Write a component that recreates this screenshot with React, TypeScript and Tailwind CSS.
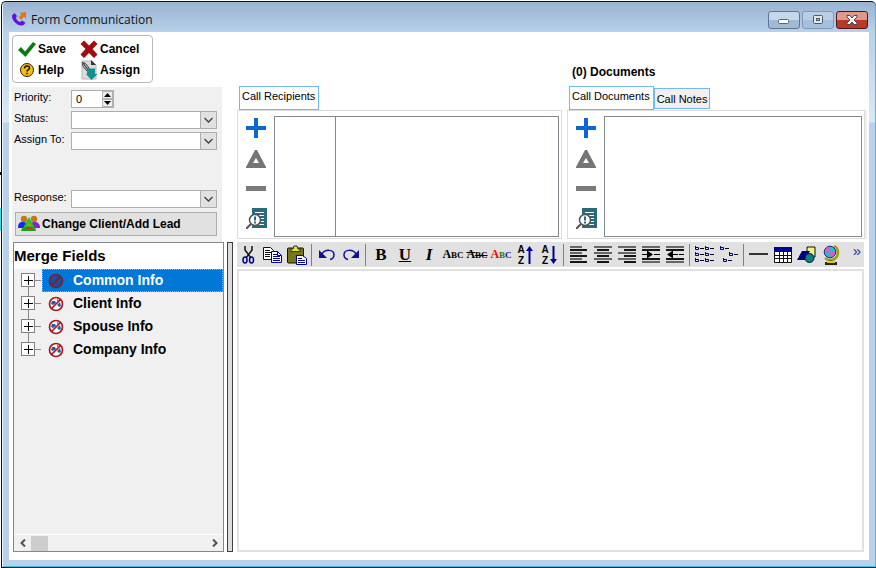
import React from "react";

type IconProps = { children: React.ReactNode; w?: number; h?: number };

function Svg({ children, w = 20, h = 20 }: IconProps) {
  return (
    <svg width={w} height={h} viewBox={`0 0 ${w} ${h}`} fill="none" aria-hidden="true" className="block shrink-0">
      {children}
    </svg>
  );
}

/* ---------- window chrome ---------- */

function TitleBar() {
  const frame = "flex h-[18px] w-8 items-center justify-center rounded-[3px] border";
  return (
    <header className="flex h-[30px] shrink-0 items-center pr-2 pl-[9px]">
      <div className="pt-1">
        <Svg w={16} h={16}>
          <path d="M1 4.500 3.500 2 6 5 4.800 6.800C5.500 9 7.200 10.500 9.300 11l1.700-1.500 3.500 2.200-2.300 2.500C7.500 16 .5 10 1 4.500Z" fill="#6410d8" />
          <path d="M8.500 2 15 1v6.500l-2.200-2L10.500 9 7.500 6.500l2.800-2.700Z" fill="#e8750a" />
        </Svg>
      </div>
      <h1 className="ml-1 flex-1 pt-[6px] font-['Open_Sans','Noto_Sans',sans-serif] text-[12px] leading-4 text-[#111]">Form Communication</h1>
      <div className="flex gap-[2px] pt-[6px]">
        <button aria-label="Minimize" className={`${frame} border-[#5f7590] bg-linear-to-b from-[#c5d7ea] from-50% to-[#a0bad5] to-50%`}>
          <Svg w={12} h={8}><rect x=".5" y="3.500" width="10" height="4" rx="1" fill="#fff" stroke="#5a6270" /></Svg>
        </button>
        <button aria-label="Maximize" className={`${frame} border-[#8199b4] bg-linear-to-b from-[#b9cfe6] from-50% to-[#a5c0dd] to-50%`}>
          <Svg w={12} h={10}>
            <rect x="1.500" y=".5" width="9" height="8" rx="1" fill="#e4e6e8" stroke="#4e5866" />
            <rect x="4.500" y="3.500" width="3" height="2" fill="#a5c0dd" stroke="#4e5866" />
          </Svg>
        </button>
        <button aria-label="Close" className={`${frame} border-[#4a1620] bg-linear-to-b from-[#e0988a] from-50% to-[#b83a22] to-50%`}>
          <Svg w={12} h={10}>
            <path d="M1 .5h3l2 2.500L8 .5h3V2L8 5l3 3v1.500H8L6 7 4 9.500H1V8l3-3-3-3Z" fill="#f4f4f4" stroke="#4a4550" />
          </Svg>
        </button>
      </div>
    </header>
  );
}

/* ---------- command box ---------- */

const SaveIcon = () => (
  <Svg><path d="M1 11 4 8l4 4.500L16 3l3 2L8.500 18Z" fill="#0b7a12" /></Svg>
);
const CancelIcon = () => (
  <Svg><path d="m1.500 5 3.500-3.500 5 5 5-5L18.500 5l-5 5 5 5.500L15 19l-5-5-5 5-3.500-3.500 5-5.500Z" fill="#a00c10" /></Svg>
);
const HelpIcon = () => (
  <Svg>
    <circle cx="10" cy="10" r="6.500" fill="#f5bd10" stroke="#2b2200" />
    <path d="M7.500 8.500c0-3.500 5-3.300 5-.5 0 1.800-2.500 1.800-2.500 3.500M10 12.800v1.500" stroke="#111" strokeWidth="1.500" />
  </Svg>
);
const AssignIcon = () => (
  <Svg>
    <path d="M3 1h10l4 4v14H3Z" fill="#dcdcdc" stroke="#b4b4b4" />
    <path d="M12 0v5h5Z" fill="#333" />
    <path d="m3 2 8 9.500M5.500 2.500C3 3 3 5 4.500 7l4 4.500c2 1.500 3.500-.5 2.500-2L7 4C5.500 2.500 4.500 4 5.500 5.500L9 10" stroke="#333" />
    <path d="M8 8.500h8V14h2.500L12.500 20 7 14h1Z" fill="#12908f" />
  </Svg>
);

function CommandBox() {
  const item = "flex h-[21px] items-center gap-px text-[12px] leading-4 font-bold";
  return (
    <div className="grid w-[141px] grid-cols-[62px_1fr] rounded-[4px] border border-[#b8b8b8] px-1 py-[2px]">
      <button className={item}><SaveIcon />Save</button>
      <button className={item}><CancelIcon />Cancel</button>
      <button className={item}><HelpIcon />Help</button>
      <button className={item}><AssignIcon />Assign</button>
    </div>
  );
}

/* ---------- call form ---------- */

function SelectRow({ id, label }: { id: string; label: string }) {
  return (
    <div className="flex h-[21px] items-center">
      <label htmlFor={id} className="w-[57px] shrink-0 pb-[3px] whitespace-nowrap">{label}</label>
      <div className="relative h-[18px] flex-1">
        <select id={id} className="block h-full w-full appearance-none border border-[#adadad] bg-white px-1 outline-none">
          <option value="" />
        </select>
        <span className="pointer-events-none absolute inset-y-0 right-0 flex w-[17px] items-center justify-center border border-[#adadad] bg-[#e1e1e1]">
          <Svg w={9} h={6}><path d="m.5 1 4 4 4-4" stroke="#404040" strokeWidth="1.300" /></Svg>
        </span>
      </div>
    </div>
  );
}

function CallForm() {
  return (
    <form className="mt-1 flex h-[155px] w-[210px] flex-col bg-[#f0f0f0] pt-px pr-[5px] pl-[2px] text-[11px] leading-[14px]">
      <div className="flex h-[21px] items-center">
        <label htmlFor="priority" className="w-[57px] pb-[3px]">Priority:</label>
        <div className="flex h-[18px] w-[43px] border border-[#adadad] bg-white">
          <input id="priority" type="text" inputMode="numeric" defaultValue="0" className="w-[30px] bg-transparent pl-1 outline-none" />
          <div className="flex w-[11px] flex-col">
            <button type="button" aria-label="Increase" className="flex h-2 items-center justify-center border border-[#b4b4b4] bg-[#eee]">
              <Svg w={7} h={4}><path d="M3.500 0 7 4H0Z" fill="#000" /></Svg>
            </button>
            <button type="button" aria-label="Decrease" className="flex h-2 items-center justify-center border border-[#b4b4b4] bg-[#eee]">
              <Svg w={7} h={4}><path d="M3.500 4 7 0H0Z" fill="#000" /></Svg>
            </button>
          </div>
        </div>
      </div>
      <SelectRow id="status" label="Status:" />
      <SelectRow id="assign" label="Assign To:" />
      <div className="mt-[37px]">
        <SelectRow id="response" label="Response:" />
      </div>
      <button type="button" className="mt-[3px] ml-px flex h-6 items-center gap-[2px] border border-[#adadad] bg-[#e1e1e1] pl-[2px] text-[12px] font-bold">
        <Svg w={22} h={18}>
          <circle cx="6" cy="4" r="3.200" fill="#c07a10" />
          <circle cx="16" cy="4" r="3.200" fill="#c07a10" />
          <path d="M0 13c0-6 3-6 5-6s5 1 5 6Z" fill="#1526f0" />
          <path d="M12 13c0-6 3-6 5-6s5 1 5 6Z" fill="#8a22c8" />
          <path d="m11 2 7 13H4Z" fill="#1fc425" />
          <path d="M3 16c1-5 4-4 8-4s6-1 7 4Z" fill="#18a51c" />
          <path d="m11 7 2.500 4h-5Z" fill="#c88a30" />
          <path d="M7 14c1-3 7-3 8 0Z" fill="#d8351c" />
        </Svg>
        Change Client/Add Lead
      </button>
    </form>
  );
}

/* ---------- recipients and documents ---------- */

const listActions = [
  { name: "Add", art: <path d="M8 0h4v8h8v4h-8v8H8v-8H0V8h8Z" fill="#0a68d0" /> },
  { name: "Edit", art: <path fillRule="evenodd" d="M9 2h2l9 17v1H0v-1ZM10 10l-3 5h6Z" fill="#757575" /> },
  { name: "Remove", art: <path d="M0 8h20v5H0Z" fill="#7a7a7a" /> },
  {
    name: "Preview",
    art: (
      <>
        <path d="M6 0h15v20H6Z" fill="#286a80" />
        <path d="M9 4.500h9M11 7.500h7M13 10.500h5M13 13.500h5M10 16.500h8" stroke="#fff" />
        <circle cx="9" cy="12" r="5.500" fill="#fff" stroke="#555" strokeWidth="1.500" />
        <path d="M5 16 0 21" stroke="#555" strokeWidth="2" />
        <path d="M9 8.500v4M9 13.500v2" stroke="#286a80" strokeWidth="2" />
      </>
    ),
  },
];

function ListPanel({ split = false }: { split?: boolean }) {
  return (
    <div className="flex h-[129px] border border-[#dcdcdc] bg-white pt-[5px] pr-[2px] pb-px">
      <div className="flex w-9 shrink-0 flex-col gap-[10px] pt-[2px] pl-2">
        {listActions.map((a) => (
          <button key={a.name} aria-label={a.name} className="h-5 w-[21px]">
            <Svg w={21} h={21}>{a.art}</Svg>
          </button>
        ))}
      </div>
      <div className="flex flex-1 border border-[#828790] bg-white">
        {split && <div className="w-[61px] border-r border-[#828790]" />}
      </div>
    </div>
  );
}

const activeTab = "h-6 border border-[#70b8f8] bg-white pr-[3px] pb-1 pl-[2px]";
const idleTab = "mb-px h-[21px] border border-[#70b8f8] bg-[#f0f0f0] px-[2px]";

function CallLists() {
  return (
    <div className="flex min-w-0 flex-1 items-end gap-[5px] pr-[2px] pb-[3px] pl-[15px] text-[11px] leading-[14px]">
      <section className="min-w-0 flex-[325]">
        <div className="flex pl-[2px]">
          <button className={activeTab}>Call Recipients</button>
        </div>
        <ListPanel split />
      </section>
      <section className="min-w-0 flex-[300]">
        <h2 className="mb-[6px] pl-[5px] text-[12px] leading-4 font-bold">(0) Documents</h2>
        <div className="flex items-end pl-[2px]">
          <button className={activeTab}>Call Documents</button>
          <button className={idleTab}>Call Notes</button>
        </div>
        <div className="border-r-2 border-[#efefef]">
          <ListPanel />
        </div>
      </section>
    </div>
  );
}

/* ---------- merge field tree ---------- */

const fields = ["Common Info", "Client Info", "Spouse Info", "Company Info"];

function FieldIcon({ selected }: { selected: boolean }) {
  return (
    <Svg w={16} h={16}>
      <circle cx="8" cy="8" r="6.500" fill={selected ? "#1f4e96" : "#fff"} />
      {!selected && <path d="M4 5h3l1 2-3 2-2-1ZM9 9l3-3 1 4-2 1ZM9 3l2 1-2 1Z" fill="#2a56b0" />}
      <circle cx="8" cy="8" r="6.500" stroke={selected ? "#7c1e34" : "#a81a20"} strokeWidth="1.700" />
      <path d="m3.500 12.500 9-9" stroke={selected ? "#7c1e34" : "#a81a20"} strokeWidth="1.700" />
    </Svg>
  );
}

function MergeTree() {
  return (
    <aside className="flex w-[211px] shrink-0 flex-col border border-[#828790] bg-[#f0f0f0]">
      <h2 className="h-[26px] bg-white text-[15px] leading-[25px] font-bold">Merge Fields</h2>
      <ul className="flex-1 text-[14px] font-bold">
        {fields.map((name, i) => (
          <li key={name} className="flex h-[23px]">
            <div className="flex w-[21px] flex-col items-end">
              <div className={i === 0 ? "mr-[6px] h-1 w-px" : "mr-[6px] h-1 w-px bg-[#888]"} />
              <button aria-label={`Expand ${name}`} className="flex size-[14px] items-center justify-center border border-[#808080] bg-white">
                <Svg w={10} h={10}><path d="M1 5.500h9M5.500 1v9" stroke="#000" /></Svg>
              </button>
              <div className={i === 3 ? "h-0" : "mr-[6px] h-[5px] w-px bg-[#888]"} />
            </div>
            <div className="mt-[11px] mr-px h-px w-[6px] bg-[#888]" />
            <div
              className={
                i === 0
                  ? "flex flex-1 items-center gap-[9px] border border-dotted border-[#ff9a30] bg-[#0078d7] pl-[5px] text-white"
                  : "flex flex-1 items-center gap-[9px] pl-[6px]"
              }
            >
              <FieldIcon selected={i === 0} />
              <span>{name}</span>
            </div>
          </li>
        ))}
      </ul>
      <div className="flex h-[17px] items-center border-t border-white">
        <button aria-label="Scroll left" className="flex w-[17px] justify-center">
          <Svg w={6} h={8}><path d="M5 .5 1.500 4 5 7.500" stroke="#505050" strokeWidth="2" /></Svg>
        </button>
        <div className="h-[15px] w-[17px] bg-[#cdcdcd]" />
        <button aria-label="Scroll right" className="ml-auto flex w-[17px] justify-center">
          <Svg w={6} h={8}><path d="M1 .5 4.500 4 1 7.500" stroke="#505050" strokeWidth="2" /></Svg>
        </button>
      </div>
    </aside>
  );
}

/* ---------- editor ---------- */

function Caps({ colors, strike = false }: { colors: string[]; strike?: boolean }) {
  return (
    <span className={strike ? "font-['Liberation_Serif',serif] text-[9px] leading-4 font-bold line-through" : "font-['Liberation_Serif',serif] text-[9px] leading-4 font-bold"}>
      <span className={`text-[12px] ${colors[0]}`}>A</span>
      <span className={colors[1]}>B</span>
      <span className={colors[2]}>C</span>
    </span>
  );
}

const serif = "font-['Liberation_Serif',serif] text-[17px] leading-5 font-bold";
const ink = ["text-black", "text-black", "text-black"];

function SortIcon({ up }: { up: boolean }) {
  return (
    <span className="flex items-center">
      <span className="flex flex-col text-[10px] leading-[11px] font-bold"><span>A</span><span>Z</span></span>
      <Svg w={8} h={20}>
        {up ? <path d="m4.500 1 3.500 5H5.500v13h-2V6H1Z" fill="#000090" /> : <path d="m4.500 19 3.500-5H5.500V1h-2v13H1Z" fill="#000090" />}
      </Svg>
    </span>
  );
}

function Lines({ rows }: { rows: [number, number][] }) {
  return (
    <Svg w={18} h={18}>
      {rows.map(([x, w], i) => (
        <rect key={i} x={x} y={i * 3} width={w} height={2} fill={i % 2 ? "#151515" : "#666"} />
      ))}
    </Svg>
  );
}

function IndentIcon({ back }: { back?: boolean }) {
  return (
    <Svg w={18} h={18}>
      <path d="M0 1h18M0 16h18" stroke="#666" strokeWidth="2" />
      <path d="M0 4h18M0 13h18" stroke="#151515" strokeWidth="2" />
      {back ? <path d="m1 8.500 6-4v8Z" fill="#000" /> : <path d="m11 8.500-6-4v8Z" fill="#000" />}
      {back ? <path d="M7 8.500h5M13 8.500h5" stroke="#000" /> : <path d="M0 8.500h6M12 8.500h6" stroke="#000" />}
    </Svg>
  );
}

function Bullet({ x, y }: { x: number; y: number }) {
  return (
    <>
      <path d={`M${x + 0.5} ${y}v3.500h3v-2h-3`} stroke="#000090" />
      <path d={`M${x + 5} ${y + 2.5}h4`} stroke="#000" />
    </>
  );
}

const groups: { name: string; art: React.ReactNode }[][] = [
  [
    {
      name: "Cut",
      art: (
        <Svg>
          <path d="M6 1v4l6 8M13 1v4l-6 8" stroke="#111" strokeWidth="1.500" />
          <ellipse cx="6" cy="15" rx="2" ry="3" stroke="#000090" strokeWidth="1.500" />
          <ellipse cx="12.500" cy="15" rx="2" ry="3" stroke="#000090" strokeWidth="1.500" />
        </Svg>
      ),
    },
    {
      name: "Copy",
      art: (
        <Svg>
          <path d="M.5 2.500h7l3 3v9H.5Z" fill="#fff" stroke="#111" />
          <path d="M2 5.500h5M2 7.500h6M2 9.500h5M2 11.500h5" stroke="#111" />
          <path d="M8.500 6.500h6l4 4v7h-10Z" fill="#fff" stroke="#000090" />
          <path d="M14.500 6.500v4h4M10 9.500h4M10 11.500h7M10 13.500h7M10 15.500h7" stroke="#000090" />
        </Svg>
      ),
    },
    {
      name: "Paste",
      art: (
        <Svg>
          <rect x=".5" y="3" width="16" height="15" rx="1" fill="#77751b" stroke="#111" />
          <path d="M4 6.500h9V4h-2l-1-3H7L6 4H4Z" fill="#e6e03b" stroke="#333" />
          <path d="M9.500 10.500h6l4 3v6h-10Z" fill="#fff" stroke="#000090" />
          <path d="M11 13.500h4M11 15.500h7M11 17.500h7" stroke="#000090" />
        </Svg>
      ),
    },
  ],
  [
    {
      name: "Undo",
      art: <Svg><path d="M5 9c3-5 12-5 12 1 0 2.500-2 4-4 4.500" stroke="#10108e" strokeWidth="1.500" /><path d="M2 5v8h8Z" fill="#10108e" /></Svg>,
    },
    {
      name: "Redo",
      art: <Svg><path d="M15 9C12 4 3 4 3 10c0 2.500 2 4 4 4.500" stroke="#10108e" strokeWidth="1.500" /><path d="M18 5v8h-8Z" fill="#10108e" /></Svg>,
    },
  ],
  [
    { name: "Bold", art: <span className={serif}>B</span> },
    { name: "Underline", art: <span className={`${serif} underline`}>U</span> },
    { name: "Italic", art: <span className={`${serif} italic`}>I</span> },
    { name: "Small caps", art: <Caps colors={ink} /> },
    { name: "Strikethrough", art: <Caps colors={ink} strike /> },
    { name: "Font colour", art: <Caps colors={["text-[#f00]", "text-[#088020]", "text-[#1010a0]"]} /> },
    { name: "Sort ascending", art: <SortIcon up /> },
    { name: "Sort descending", art: <SortIcon up={false} /> },
  ],
  [
    { name: "Align left", art: <Lines rows={[[0, 12], [0, 17], [0, 12], [0, 17], [0, 12], [0, 17]]} /> },
    { name: "Center", art: <Lines rows={[[0, 18], [3, 12], [0, 18], [3, 12], [0, 18], [3, 12]]} /> },
    { name: "Align right", art: <Lines rows={[[0, 18], [6, 12], [0, 18], [6, 12], [0, 18], [6, 12]]} /> },
    { name: "Indent", art: <IndentIcon /> },
    { name: "Outdent", art: <IndentIcon back /> },
  ],
  [
    {
      name: "Bullets",
      art: <Svg>{[1, 7, 13].map((y) => <React.Fragment key={y}><Bullet x={0} y={y} /><Bullet x={10} y={y} /></React.Fragment>)}</Svg>,
    },
    { name: "Outline", art: <Svg><Bullet x={1} y={1} /><Bullet x={10} y={7} /><Bullet x={4} y={13} /></Svg> },
  ],
  [
    { name: "Horizontal line", art: <Svg><path d="M0 9h19" stroke="#333" strokeWidth="2" /></Svg> },
    {
      name: "Insert table",
      art: (
        <Svg>
          <path d="M1.500 2.500h17v15h-17Z" fill="#fff" stroke="#111" />
          <path d="M1 2h18v5H1Z" fill="#000090" />
          <path d="M1 10.500h18M1 13.500h18M6.500 7v11M10.500 7v11M14.500 7v11" stroke="#111" />
        </Svg>
      ),
    },
    {
      name: "Insert shape",
      art: (
        <Svg>
          <path d="M10 2h8v10h-8Z" fill="#f6f08a" stroke="#111" />
          <path d="M5 6h8l-5 9H0Z" fill="#000080" />
          <circle cx="12.500" cy="13" r="4.500" fill="#0b8080" stroke="#113" />
        </Svg>
      ),
    },
    {
      name: "Insert link",
      art: (
        <Svg>
          <path d="M13 1c6 3 5 12-2 14H7l-3-2" stroke="#a89a10" strokeWidth="2.500" />
          <circle cx="9" cy="7" r="5.800" fill="#28b8d0" stroke="#1c2a90" />
          <path d="m6 2 3 1-2 4-3 1V5ZM10 6l4 1-1 4-3 1-2-3Z" fill="#e05ac0" />
          <path d="M10 15v2" stroke="#7a700a" strokeWidth="3" />
          <path d="M4 17h12v3H4Z" fill="#222" /><path d="M6 16h8v2H6Z" fill="#d8cc20" />
        </Svg>
      ),
    },
  ],
];

function Editor() {
  return (
    <main className="ml-1 flex min-w-0 flex-1 flex-col">
      <div role="toolbar" aria-label="Formatting" className="mb-[2px] flex h-[25px] shrink-0 items-center overflow-hidden bg-[#e1e1e1]">
        {groups.map((g, i) => (
          <React.Fragment key={i}>
            {i > 0 && <div className="mr-[3px] ml-[2px] h-[22px] w-px shrink-0 bg-[#808080]" />}
            {g.map((t) => (
              <button key={t.name} aria-label={t.name} className="flex h-6 w-6 shrink-0 items-center justify-center">
                {t.art}
              </button>
            ))}
          </React.Fragment>
        ))}
        <button aria-label="More tools" className="ml-auto self-start pr-[3px] text-[15px] leading-[17px] text-[#303090]">»</button>
      </div>
      <textarea aria-label="Message" className="w-full flex-1 resize-none border-2 border-[#e1e1e1] bg-white p-1 text-[12px] outline-none" />
    </main>
  );
}

export default function App() {
  return (
    <div className="flex h-screen flex-col bg-[#f8f8f8] bg-[linear-gradient(#fff_172px,#000_172px,#000_175px,#fff_175px,#fff_208px,#2fe0f0_208px,#2fe0f0_231px,#fff_231px)] pt-px pl-px font-['Liberation_Sans',Arial,sans-serif] text-black">
      <div className="flex min-h-0 flex-1 flex-col rounded-t-[5px] border-t border-b border-l border-[#0a1418] bg-[linear-gradient(#98b3d1,#b9d1ea_30px,#dbe8f6_120px,#b9d1ea_121px)] shadow-[inset_1px_0_0_#eef6fc,inset_-1px_-1px_0_#25cbe8]">
        <TitleBar />
        <div className="mx-[7px] mb-[7px] flex min-h-0 flex-1 flex-col bg-white">
          <div className="flex">
            <div className="w-[213px] shrink-0 pt-[3px] pl-[3px]">
              <CommandBox />
              <CallForm />
            </div>
            <CallLists />
          </div>
          <div className="flex min-h-0 flex-1 pr-[5px] pb-2 pl-1">
            <MergeTree />
            <div role="separator" className="ml-[3px] w-[6px] shrink-0 border border-[#404040] bg-[#dcdcdc]" />
            <Editor />
          </div>
        </div>
      </div>
    </div>
  );
}
